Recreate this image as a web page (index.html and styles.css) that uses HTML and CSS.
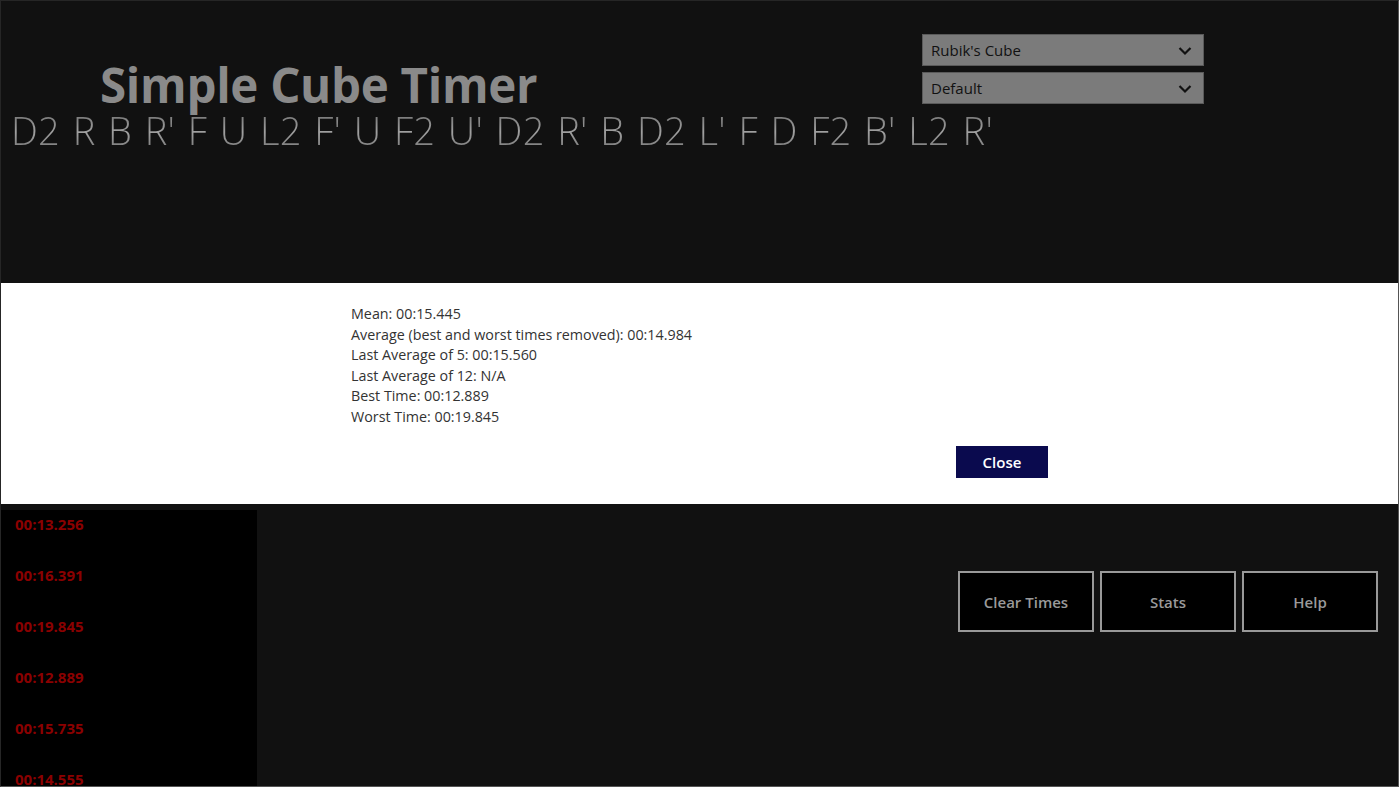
FILE: index.html
```html
<!DOCTYPE html>
<html>
<head>
<meta charset="utf-8">
<link rel="stylesheet" href="styles.css">
</head>
<body>
<div class="app">
  <header class="top">
    <div class="top-row">
      <h1 class="title">Simple Cube Timer</h1>
      <div class="selects">
        <div class="select"><span>Rubik's Cube</span><svg class="chev" viewBox="0 0 14 10" width="14" height="10"><path d="M1.5 2 L7 7.5 L12.5 2" fill="none" stroke="#111" stroke-width="2.2"/></svg></div>
        <div class="select"><span>Default</span><svg class="chev" viewBox="0 0 14 10" width="14" height="10"><path d="M1.5 2 L7 7.5 L12.5 2" fill="none" stroke="#111" stroke-width="2.2"/></svg></div>
      </div>
    </div>
    <div class="scramble">D2 R B R' F U L2 F' U F2 U' D2 R' B D2 L' F D F2 B' L2 R'</div>
  </header>
  <section class="dialog">
    <div class="dialog-inner">
      <div class="stats">
        <div>Mean: 00:15.445</div>
        <div>Average (best and worst times removed): 00:14.984</div>
        <div>Last Average of 5: 00:15.560</div>
        <div>Last Average of 12: N/A</div>
        <div>Best Time: 00:12.889</div>
        <div>Worst Time: 00:19.845</div>
      </div>
      <div class="dialog-actions"><button class="close">Close</button></div>
    </div>
  </section>
  <section class="bottom">
    <div class="times">
      <div class="time">00:13.256</div>
      <div class="time">00:16.391</div>
      <div class="time">00:19.845</div>
      <div class="time">00:12.889</div>
      <div class="time">00:15.735</div>
      <div class="time">00:14.555</div>
    </div>
    <div class="actions">
      <button class="btn">Clear Times</button>
      <button class="btn">Stats</button>
      <button class="btn">Help</button>
    </div>
  </section>
</div>
</body>
</html>
```
FILE: styles.css
```css
* { box-sizing: border-box; }
html, body { margin: 0; padding: 0; }
body {
  width: 1399px;
  height: 787px;
  overflow: hidden;
  background: #111;
  font-family: "Open Sans", "Noto Sans", sans-serif;
}
.app {
  width: 1399px;
  height: 787px;
  border: 1px solid #262626;
  border-right-color: #555;
  border-bottom-color: #555;
  display: flex;
  flex-direction: column;
  background: #111;
}
.top {
  height: 282px;
  flex: none;
}
.top-row {
  display: flex;
  align-items: flex-start;
}
.title {
  margin: 59px 0 0 99px;
  font-size: 47.5px;
  line-height: 50px;
  font-weight: 700;
  color: #8a8a8a;
  letter-spacing: -0.3px;
  white-space: nowrap;
}
.selects {
  margin: 33px 194px 0 auto;
  display: flex;
  flex-direction: column;
  gap: 6px;
}
.select {
  width: 282px;
  height: 32px;
  background: #7b7b7b;
  border: 1px solid #5a5a5a;
  display: flex;
  align-items: center;
  justify-content: space-between;
  padding: 0 11px 0 8px;
  font-size: 15px;
  color: #111;
}
.chev { display: block; margin-top: 2px; }
.scramble {
  margin: 0 0 0 10px;
  font-size: 38px;
  font-weight: 300;
  line-height: 40px;
  letter-spacing: 0.25px;
  word-spacing: 2.5px;
  color: #8c8c8c;
  white-space: nowrap;
  background: linear-gradient(#6e6e6e, #a0a0a0 55%, #7a7a7a);
  -webkit-background-clip: text;
  background-clip: text;
  -webkit-text-fill-color: transparent;
}
.dialog {
  height: 221px;
  flex: none;
  background: #fff;
}
.dialog-inner {
  width: 697px;
  margin-left: 350px;
  padding-top: 21px;
}
.stats {
  font-size: 14.3px;
  line-height: 20.5px;
  color: #333;
}
.dialog-actions {
  display: flex;
  justify-content: flex-end;
  margin-top: 19px;
}
.close {
  width: 92px;
  height: 32px;
  background: #0a0a4e;
  border: none;
  color: #fff;
  font-family: inherit;
  font-weight: 600;
  font-size: 15px;
  padding: 0;
}
.bottom {
  flex: 1;
  display: flex;
  padding-top: 6px;
  overflow: hidden;
}
.times {
  width: 256px;
  background: #000;
  padding: 4px 0 0 14px;
  flex: none;
}
.time {
  color: #8b0000;
  font-weight: 700;
  font-size: 15px;
  line-height: 21px;
  height: 51px;
}
.actions {
  display: flex;
  gap: 6px;
  margin: 61px 0 0 701px;
  align-items: flex-start;
}
.btn {
  width: 136px;
  height: 61px;
  background: #000;
  border: 2px solid #999;
  color: #9a9a9a;
  font-family: inherit;
  font-size: 15px;
  font-weight: 600;
  padding: 0;
}
```
